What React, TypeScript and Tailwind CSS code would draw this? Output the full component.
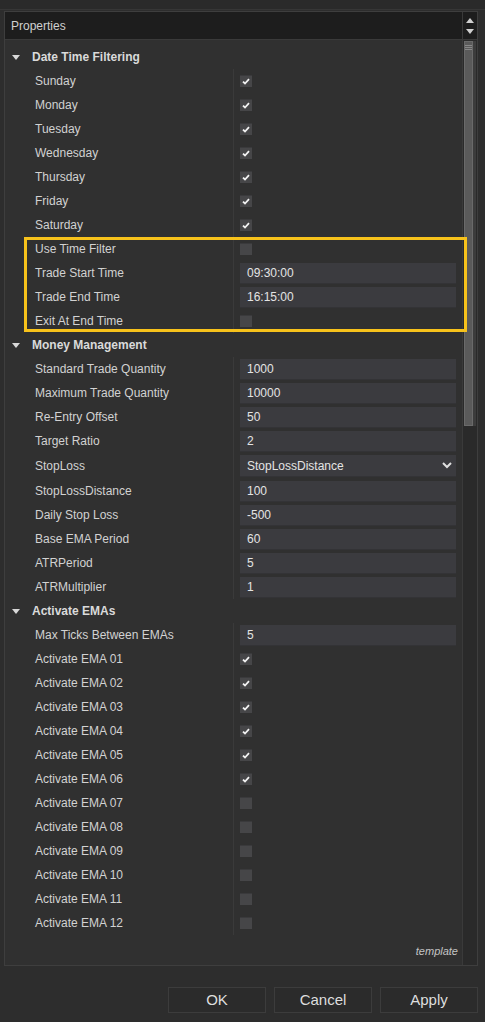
import React from "react";

type Row =
  | { kind: "header"; label: string }
  | { kind: "check"; label: string; checked: boolean }
  | { kind: "text"; label: string; value: string }
  | { kind: "select"; label: string; value: string };

const rows: Row[] = [
  { kind: "header", label: "Date Time Filtering" },
  { kind: "check", label: "Sunday", checked: true },
  { kind: "check", label: "Monday", checked: true },
  { kind: "check", label: "Tuesday", checked: true },
  { kind: "check", label: "Wednesday", checked: true },
  { kind: "check", label: "Thursday", checked: true },
  { kind: "check", label: "Friday", checked: true },
  { kind: "check", label: "Saturday", checked: true },
  { kind: "check", label: "Use Time Filter", checked: false },
  { kind: "text", label: "Trade Start Time", value: "09:30:00" },
  { kind: "text", label: "Trade End Time", value: "16:15:00" },
  { kind: "check", label: "Exit At End Time", checked: false },
  { kind: "header", label: "Money Management" },
  { kind: "text", label: "Standard Trade Quantity", value: "1000" },
  { kind: "text", label: "Maximum Trade Quantity", value: "10000" },
  { kind: "text", label: "Re-Entry Offset", value: "50" },
  { kind: "text", label: "Target Ratio", value: "2" },
  { kind: "select", label: "StopLoss", value: "StopLossDistance" },
  { kind: "text", label: "StopLossDistance", value: "100" },
  { kind: "text", label: "Daily Stop Loss", value: "-500" },
  { kind: "text", label: "Base EMA Period", value: "60" },
  { kind: "text", label: "ATRPeriod", value: "5" },
  { kind: "text", label: "ATRMultiplier", value: "1" },
  { kind: "header", label: "Activate EMAs" },
  { kind: "text", label: "Max Ticks Between EMAs", value: "5" },
  ...Array.from({ length: 12 }, (_, i) => ({
    kind: "check" as const,
    label: `Activate EMA ${String(i + 1).padStart(2, "0")}`,
    checked: i < 6,
  })),
];

function Check({ checked }: { checked: boolean }) {
  return (
    <div className="w-[12px] h-[12px] bg-[#464648] border-t border-[#3a3a3c] flex items-center justify-center">
      {checked && (
        <svg width="8" height="7" viewBox="0 0 8 7">
          <path d="M1 3.6 L3 5.5 L7 1.2" stroke="#f2f2f2" strokeWidth="1.8" fill="none" />
        </svg>
      )}
    </div>
  );
}

function PropRow({ row }: { row: Row }) {
  if (row.kind === "header") {
    return (
      <div className="h-[24px] flex items-center">
        <svg width="8" height="5" viewBox="0 0 8 5" className="ml-[7px] mr-[12px]">
          <path d="M0 0 L8 0 L4 5 Z" fill="#d8d8d8" />
        </svg>
        <span className="font-bold text-[12px] text-[#dadada]">{row.label}</span>
      </div>
    );
  }
  const tall = row.kind === "select";
  return (
    <div className={tall ? "h-[26px] flex items-center" : "h-[24px] flex items-center"}>
      <div className="w-[228px] pl-[30px] text-[12px] text-[#d2d2d2] shrink-0">{row.label}</div>
      <div className={tall ? "w-[1px] h-[26px] bg-[#3a3a3a]" : "w-[1px] h-[24px] bg-[#3a3a3a]"} />
      <div className="flex-1 pl-[6px] pr-[6px] flex items-center">
        {row.kind === "check" && <Check checked={row.checked} />}
        {row.kind === "text" && (
          <div className="h-[21px] w-full bg-[#3b3b3f] border-b border-[#333336] flex items-center pl-[7px] text-[12px] text-[#e4e4e4]">
            {row.value}
          </div>
        )}
        {row.kind === "select" && (
          <div className="h-[22px] w-full bg-[#3b3b3f] border-b border-[#333336] flex items-center justify-between pl-[7px] pr-[4px] text-[12px] text-[#e4e4e4]">
            <span>{row.value}</span>
            <svg width="10" height="7" viewBox="0 0 10 7">
              <path d="M1 1 L5 5 L9 1" stroke="#e0e0e0" strokeWidth="2" fill="none" />
            </svg>
          </div>
        )}
      </div>
    </div>
  );
}

export default function App() {
  return (
    <div
      className="w-[485px] h-[1022px] bg-[#2d2d2d] flex flex-col relative overflow-hidden"
      style={{ fontFamily: '"Liberation Sans", Arial, sans-serif' }}
    >
      <div className="h-[10px] bg-[#2a2a2a] border-b border-[#363636]" />
      <div className="ml-[4px] mr-[7px] mt-[1px] h-[955px] border border-[#3e3e3e] bg-[#303030] flex">
        <div className="flex-1 flex flex-col">
          <div className="h-[28px] bg-[#1d1d1d] border-b border-[#3a3a3a] flex items-center pl-[6px] text-[12px] text-[#d0d0d0]">
            Properties
          </div>
          <div className="pt-[5px] flex flex-col">
            {rows.map((r, i) => (
              <PropRow key={i} row={r} />
            ))}
          </div>
          <div className="flex-1 flex items-end justify-end pr-[4px] pb-[6px]">
            <span className="italic text-[11px] text-[#c4c4c4]">template</span>
          </div>
        </div>
        <div className="w-[15px] flex flex-col bg-[#2a2a2a] border-l border-[#3a3a3a]">
          <div className="h-[28px] bg-[#1d1d1d] border-b border-[#3a3a3a] flex flex-col items-center justify-center gap-[6px]">
            <svg width="8" height="5" viewBox="0 0 8 5">
              <path d="M0 5 L8 5 L4 0 Z" fill="#d0d0d0" />
            </svg>
            <svg width="8" height="5" viewBox="0 0 8 5">
              <path d="M0 0 L8 0 L4 5 Z" fill="#d0d0d0" />
            </svg>
          </div>
          <div className="flex pl-[1px] pt-[1px]">
            <div className="w-[9px] h-[385px] bg-[#5a5a5a] border border-[#6a6a6a] flex flex-col items-center pt-[3px] gap-[1px]">
              <div className="w-[7px] h-[1px] bg-[#888]" />
              <div className="w-[7px] h-[1px] bg-[#888]" />
              <div className="w-[7px] h-[1px] bg-[#888]" />
            </div>
            <div className="w-[3px] h-[385px] bg-[#3c3c3c]" />
          </div>
        </div>
      </div>
      <div className="flex justify-end gap-[8px] pr-[7px] mt-[21px]">
        {["OK", "Cancel", "Apply"].map((b) => (
          <div
            key={b}
            className="w-[98px] h-[26px] bg-[#2b2b2b] border border-[#3c3c3c] flex items-center justify-center text-[15px] text-[#dedede]"
          >
            {b}
          </div>
        ))}
      </div>
      <div className="absolute left-[24px] top-[237px] w-[443px] h-[95px] border-[3px] border-[#f7c21b]" />
    </div>
  );
}
